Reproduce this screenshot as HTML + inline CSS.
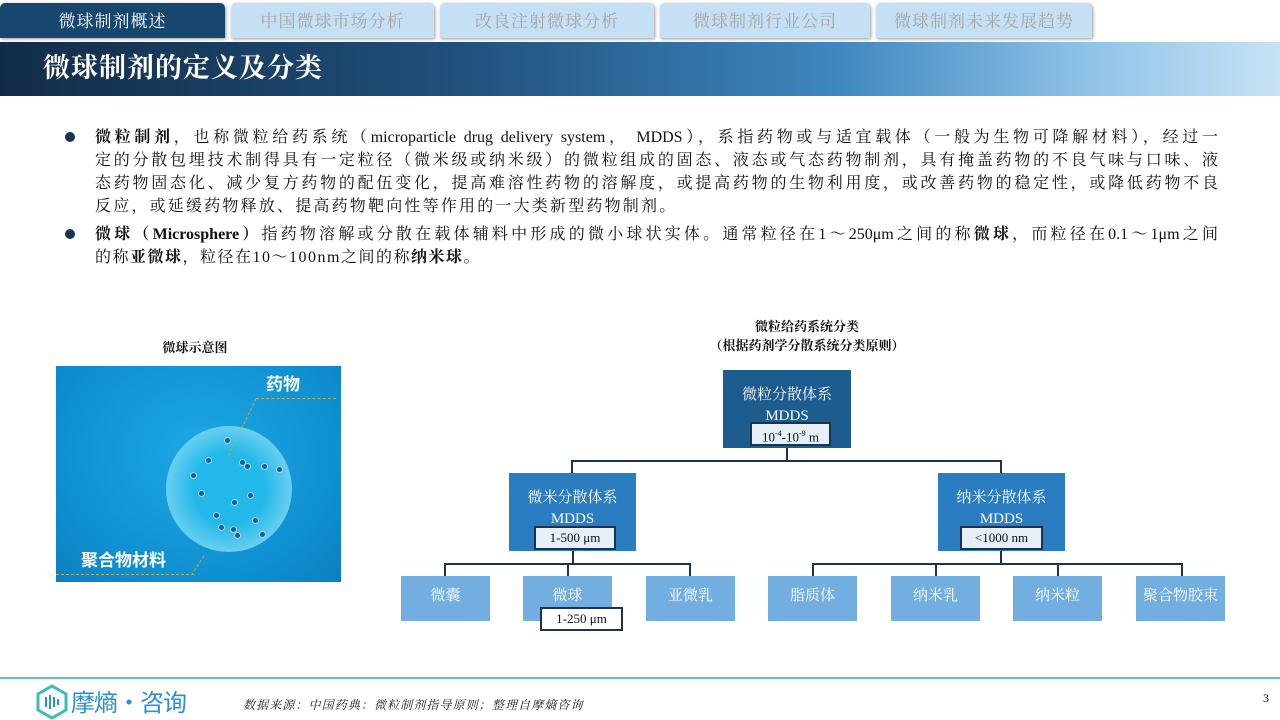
<!DOCTYPE html>
<html><head><meta charset="utf-8"><style>
*{margin:0;padding:0;box-sizing:border-box}
body{width:1280px;height:720px;position:relative;background:#fff;overflow:hidden;font-family:"Liberation Serif","Noto Serif CJK SC",serif;color:#111}
.a{position:absolute}
.tab{position:absolute;top:3px;height:35px;border-radius:5px 5px 0 0;background:#c5e0f4;color:#a5a5a5;font-size:17px;text-align:center;line-height:38px;box-shadow:1px 1px 3px #999;letter-spacing:1px}
.hdr{left:0;top:42px;width:1280px;height:54px;background:linear-gradient(90deg,#122c48 0%,#1f4f7b 35%,#3d86bf 65%,#8fc3e8 85%,#c8e2f5 100%)}
.tx{position:absolute;left:95px;width:1123px;font-size:16px;line-height:23px}
.j{text-align:justify;text-align-last:justify}
.dot{position:absolute;left:65px;width:10px;height:10px;border-radius:50%;background:#1a3350}
.box{position:absolute;color:#fff;text-align:center;font-size:15px;line-height:21px}
.lab{position:absolute;background:#e6eef6;border:2px solid #1a3350;color:#111;font-size:13px;text-align:center;line-height:20px;height:24px}
.ln{position:absolute;background:#1a3350}
.bb{position:absolute;top:576px;width:89px;height:45px;background:#72afe0;color:#fff;font-size:15px;text-align:center;line-height:40px}
.p{position:absolute;width:7px;height:7px;border-radius:50%;background:#1d5a90;border:1px solid #9cd8f0}
</style></head><body>
<div class="tab" style="left:0;width:225px;background:#17466e;color:#fff">微球制剂概述</div>
<div class="tab" style="left:231px;width:203px">中国微球市场分析</div>
<div class="tab" style="left:440px;width:214px">改良注射微球分析</div>
<div class="tab" style="left:660px;width:210px">微球制剂行业公司</div>
<div class="tab" style="left:876px;width:216px">微球制剂未来发展趋势</div>
<div class="a hdr"></div>
<div class="a" style="left:43px;top:48px;font-size:27px;color:#fff;font-weight:bold;letter-spacing:1px;line-height:40px">微球制剂的定义及分类</div>

<div class="dot" style="top:132px"></div>
<div class="tx" style="top:126px">
<div class="j"><b>微粒制剂</b>，也称微粒给药系统（microparticle drug delivery system， MDDS），系指药物或与适宜载体（一般为生物可降解材料），经过一</div>
<div class="j">定的分散包埋技术制得具有一定粒径（微米级或纳米级）的微粒组成的固态、液态或气态药物制剂，具有掩盖药物的不良气味与口味、液</div>
<div class="j">态药物固态化、减少复方药物的配伍变化，提高难溶性药物的溶解度，或提高药物的生物利用度，或改善药物的稳定性，或降低药物不良</div>
<div style="letter-spacing:2.2px">反应，或延缓药物释放、提高药物靶向性等作用的一大类新型药物制剂。</div>
</div>
<div class="dot" style="top:229px"></div>
<div class="tx" style="top:223px">
<div class="j"><b>微球（Microsphere）</b>指药物溶解或分散在载体辅料中形成的微小球状实体。通常粒径在1～250μm之间的称<b>微球</b>，而粒径在0.1～1μm之间</div>
<div style="letter-spacing:1.5px">的称<b>亚微球</b>，粒径在10～100nm之间的称<b>纳米球</b>。</div>
</div>

<div class="a" style="left:100px;top:337px;width:190px;text-align:center;font-size:13px;font-weight:bold">微球示意图</div>
<div class="a" style="left:56px;top:366px;width:285px;height:216px;background:radial-gradient(ellipse at 50% 40%,#1ca8e4,#0f8fd0 70%,#0a7fc0);overflow:hidden">
<div class="a" style="left:110px;top:60px;width:126px;height:126px;border-radius:50%;background:radial-gradient(circle,#22b8ea 40%,#7fd6f2 80%,#d8f3fb 100%)"></div>
<div class="p" style="left:168px;top:71px"></div><div class="p" style="left:149px;top:91px"></div><div class="p" style="left:183px;top:93px"></div>
<div class="p" style="left:188px;top:97px"></div><div class="p" style="left:205px;top:97px"></div><div class="p" style="left:220px;top:100px"></div>
<div class="p" style="left:134px;top:106px"></div><div class="p" style="left:142px;top:124px"></div><div class="p" style="left:191px;top:126px"></div>
<div class="p" style="left:175px;top:133px"></div><div class="p" style="left:157px;top:146px"></div><div class="p" style="left:196px;top:151px"></div>
<div class="p" style="left:162px;top:158px"></div><div class="p" style="left:174px;top:160px"></div><div class="p" style="left:178px;top:166px"></div><div class="p" style="left:203px;top:165px"></div>
<div class="a" style="left:210px;top:4px;color:#fff;font-weight:bold;font-size:17px;font-family:'Noto Sans CJK SC',sans-serif">药物</div>
<div class="a" style="left:25px;top:180px;color:#fff;font-weight:bold;font-size:17px;font-family:'Noto Sans CJK SC',sans-serif">聚合物材料</div>
<div class="a" style="left:200px;top:32px;width:80px;border-top:1px dashed #c9a84a"></div>
<svg class="a" style="left:0;top:0" width="285" height="216"><path d="M200 33 L172 90 M148 190 L136 208" stroke="#c9a84a" stroke-dasharray="3 2" fill="none"/></svg>
<div class="a" style="left:0;top:208px;width:138px;border-top:1px dashed #c9a84a"></div>
</div>

<div class="a" style="left:600px;top:317px;width:414px;text-align:center;font-size:13px;font-weight:bold;line-height:19px">微粒给药系统分类<br>（根据药剂学分散系统分类原则）</div>

<div class="box" style="left:723px;top:370px;width:128px;height:78px;background:#1d5c8f;padding-top:15px">微粒分散体系<br>MDDS</div>
<div class="lab" style="left:750px;top:422px;width:81px">10<sup style="font-size:8px">-4</sup>-10<sup style="font-size:8px">-9</sup> m</div>
<div class="ln" style="left:786px;top:448px;width:2px;height:13px"></div>
<div class="ln" style="left:571px;top:460px;width:431px;height:2px"></div>
<div class="ln" style="left:571px;top:460px;width:2px;height:13px"></div>
<div class="ln" style="left:1000px;top:460px;width:2px;height:13px"></div>

<div class="box" style="left:509px;top:473px;width:127px;height:78px;background:#2a7dc0;padding-top:15px">微米分散体系<br>MDDS</div>
<div class="lab" style="left:534px;top:526px;width:82px">1-500 μm</div>
<div class="box" style="left:938px;top:473px;width:127px;height:78px;background:#2a7dc0;padding-top:15px">纳米分散体系<br>MDDS</div>
<div class="lab" style="left:960px;top:526px;width:83px">&lt;1000 nm</div>

<div class="ln" style="left:572px;top:551px;width:2px;height:13px"></div>
<div class="ln" style="left:444px;top:563px;width:247px;height:2px"></div>
<div class="ln" style="left:444px;top:563px;width:2px;height:13px"></div>
<div class="ln" style="left:567px;top:563px;width:2px;height:13px"></div>
<div class="ln" style="left:689px;top:563px;width:2px;height:13px"></div>
<div class="ln" style="left:1000px;top:551px;width:2px;height:13px"></div>
<div class="ln" style="left:812px;top:563px;width:371px;height:2px"></div>
<div class="ln" style="left:812px;top:563px;width:2px;height:13px"></div>
<div class="ln" style="left:935px;top:563px;width:2px;height:13px"></div>
<div class="ln" style="left:1057px;top:563px;width:2px;height:13px"></div>
<div class="ln" style="left:1181px;top:563px;width:2px;height:13px"></div>

<div class="bb" style="left:401px">微囊</div>
<div class="bb" style="left:523px">微球</div>
<div class="bb" style="left:646px">亚微乳</div>
<div class="bb" style="left:768px">脂质体</div>
<div class="bb" style="left:891px">纳米乳</div>
<div class="bb" style="left:1013px">纳米粒</div>
<div class="bb" style="left:1136px">聚合物胶束</div>
<div class="lab" style="left:540px;top:607px;width:83px;background:#fff">1-250 μm</div>

<div class="a" style="left:0;top:677px;width:1280px;height:2px;background:#5fc7c0"></div>
<svg class="a" style="left:34px;top:684px" width="36" height="36" viewBox="0 0 36 36"><path d="M18 2 L32 10 L32 26 L18 34 L4 26 L4 10 Z" fill="none" stroke="#3cbcb4" stroke-width="3"/><path d="M12 13v10M16 11v14M20 13v10M24 15v6" stroke="#2a8fd8" stroke-width="2"/></svg>
<div class="a" style="left:71px;top:685px;font-size:24px;color:#2a8fd8;font-family:'Noto Sans CJK SC',sans-serif;line-height:32px;letter-spacing:-1px">摩熵·咨询</div>
<div class="a" style="left:243px;top:696px;font-size:12px;font-style:italic;color:#222;letter-spacing:1.1px">数据来源：中国药典：微粒制剂指导原则；整理自摩熵咨询</div>
<div class="a" style="left:1263px;top:691px;font-size:12px">3</div>
</body></html>
